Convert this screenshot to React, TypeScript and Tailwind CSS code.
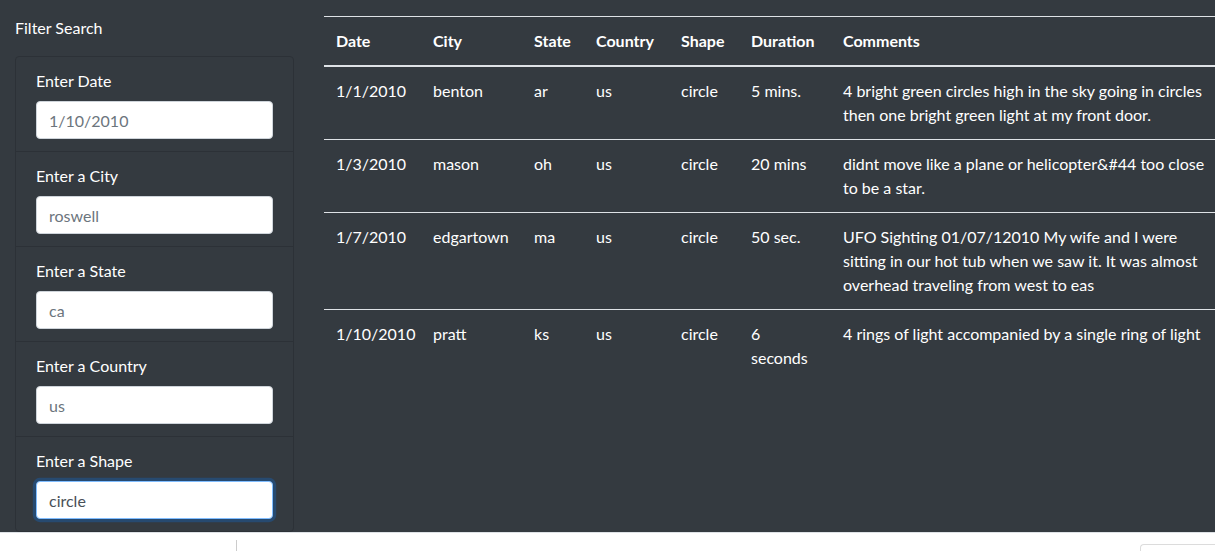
import React from 'react';

interface Sighting {
  date: string;
  city: string;
  state: string;
  country: string;
  shape: string;
  duration: string;
  comments: string;
}

const sightings: Sighting[] = [
  {
    date: '1/1/2010',
    city: 'benton',
    state: 'ar',
    country: 'us',
    shape: 'circle',
    duration: '5 mins.',
    comments: '4 bright green circles high in the sky going in circles then one bright green light at my front door.',
  },
  {
    date: '1/3/2010',
    city: 'mason',
    state: 'oh',
    country: 'us',
    shape: 'circle',
    duration: '20 mins',
    comments: 'didnt move like a plane or helicopter&#44 too close to be a star.',
  },
  {
    date: '1/7/2010',
    city: 'edgartown',
    state: 'ma',
    country: 'us',
    shape: 'circle',
    duration: '50 sec.',
    comments: 'UFO Sighting 01/07/12010 My wife and I were sitting in our hot tub when we saw it. It was almost overhead traveling from west to eas',
  },
  {
    date: '1/10/2010',
    city: 'pratt',
    state: 'ks',
    country: 'us',
    shape: 'circle',
    duration: '6 seconds',
    comments: '4 rings of light accompanied by a single ring of light',
  },
];

const filters = [
  { label: 'Enter Date', placeholder: '1/10/2010', value: '' },
  { label: 'Enter a City', placeholder: 'roswell', value: '' },
  { label: 'Enter a State', placeholder: 'ca', value: '' },
  { label: 'Enter a Country', placeholder: 'us', value: '' },
  { label: 'Enter a Shape', placeholder: '', value: 'circle' },
];

const columns = [
  { key: 'date', title: 'Date', width: 'w-[97px]' },
  { key: 'city', title: 'City', width: 'w-[101px]' },
  { key: 'state', title: 'State', width: 'w-[62px]' },
  { key: 'country', title: 'Country', width: 'w-[85px]' },
  { key: 'shape', title: 'Shape', width: 'w-[70px]' },
  { key: 'duration', title: 'Duration', width: 'w-[92px]' },
  { key: 'comments', title: 'Comments', width: 'w-[394px]' },
] as const;

const FilterPanel: React.FC = () => (
  <aside className="w-[309px] shrink-0 px-[15px]">
    <h5 className="pt-[16px] pb-[16px] text-[16px] leading-[24px] text-white">Filter Search</h5>
    <ul className="rounded border border-[#2c3137]">
      {filters.map((f, i) => (
        <li
          key={f.label}
          className={`px-[20px] pt-[12px] pb-[12px] ${i > 0 ? 'border-t border-[#2c3137]' : ''}`}
        >
          <label className="mb-[8px] block text-[16px] leading-[24px] text-white">{f.label}</label>
          <input
            type="text"
            readOnly
            placeholder={f.placeholder}
            defaultValue={f.value}
            className={
              f.value
                ? 'block h-[38px] w-[237px] rounded border border-[#80bdff] bg-white px-[12px] text-[16px] text-[#495057] shadow-[0_0_0_3.2px_rgba(0,123,255,0.25)] outline-none'
                : 'block h-[38px] w-[237px] rounded border border-[#ced4da] bg-white px-[12px] text-[16px] text-[#495057] outline-none placeholder:text-[#6c757d]'
            }
          />
        </li>
      ))}
    </ul>
  </aside>
);

const SightingsTable: React.FC = () => (
  <section className="min-w-0 flex-1 overflow-hidden pl-[15px] pt-[16px]">
    <table className="w-[901px] table-fixed border-collapse text-left text-[16px] leading-[24px] text-white">
      <thead>
        <tr className="border-t border-[#dee2e6]">
          {columns.map((c) => (
            <th
              key={c.key}
              className={`${c.width} border-b-2 border-[#dee2e6] p-[12px] align-bottom font-bold`}
            >
              {c.title}
            </th>
          ))}
        </tr>
      </thead>
      <tbody>
        {sightings.map((s) => (
          <tr key={s.date} className="border-t border-[#dee2e6] first:border-t-0">
            {columns.map((c) => (
              <td key={c.key} className="p-[12px] align-top">
                {s[c.key]}
              </td>
            ))}
          </tr>
        ))}
      </tbody>
    </table>
  </section>
);

export default function App() {
  return (
    <div className="min-h-screen bg-white font-['Lato',sans-serif]">
      <div className="flex h-[532px] bg-[#343a40]">
        <FilterPanel />
        <SightingsTable />
      </div>
      <div className="flex h-[19px] border-t border-[#dee2e6]">
        <div className="ml-[236px] mt-[7px] h-[12px] w-px bg-[#cccccc]" />
        <div className="ml-auto mt-[11px] h-[10px] w-[75px] rounded-tl border-l border-t border-[#dcdcdc]" />
      </div>
    </div>
  );
}
